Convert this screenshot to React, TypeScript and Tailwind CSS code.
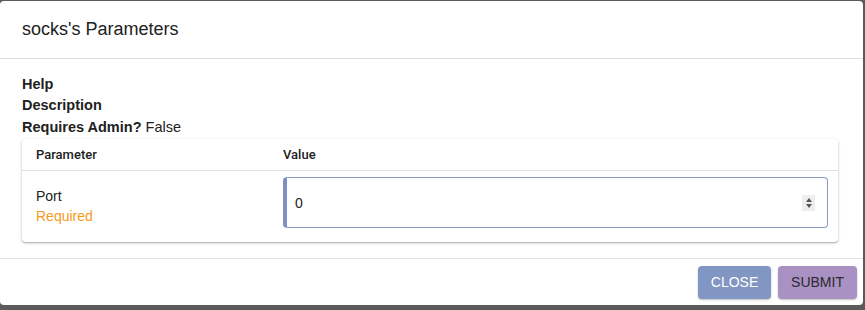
import React from "react";

export default function App() {
  return (
    <div className="w-[865px] h-[310px] bg-[#5b5b5b] overflow-hidden">
      <div className="mt-px w-[863px] h-[304px] bg-white rounded-[4px] flex flex-col font-['Liberation_Sans',Arial,sans-serif] text-[#212121]">
        <div className="h-[58px] px-[22px] flex items-center border-b border-[#dedede] text-[18px]">
          socks's Parameters
        </div>
        <div className="pl-[22px] pr-[25px] pt-[15px] pb-[16px] border-b border-[#e0e0e0]">
          <div className="text-[14.5px] leading-[21px] font-bold">Help</div>
          <div className="text-[14.5px] leading-[21px] font-bold">Description</div>
          <div className="text-[14.5px] leading-[22px]">
            <span className="font-bold">Requires Admin?</span> False
          </div>
          <div className="mt-[1px] rounded-[4px] shadow-[0_1px_3px_rgba(0,0,0,0.25),0_1px_1px_rgba(0,0,0,0.14)] text-[13px]">
            <div className="h-[32px] flex items-center border-b border-[#e0e0e0] font-medium font-['Roboto',sans-serif]">
              <div className="w-[261px] pl-[14px]">Parameter</div>
              <div>Value</div>
            </div>
            <div className="h-[71px] flex items-start">
              <div className="w-[261px] pl-[14px] pt-[15px] flex flex-col text-[14px]">
                <span className="leading-[20px]">Port</span>
                <span className="leading-[20px] text-[#f79a1b]">Required</span>
              </div>
              <div className="flex-1 pr-[10px] pt-[6px]">
                <div className="h-[51px] rounded-[4px] border border-[#8a9bc6] border-l-[4px] border-l-[#7d90c1] flex items-center pl-[8px] pr-[12px] text-[14px]">
                  <span className="flex-1 pt-px">0</span>
                  <div className="w-[13px] h-[16px] bg-[#eeeeee] flex flex-col items-center justify-center gap-[2px]">
                    <div className="w-0 h-0 border-l-[3px] border-r-[3px] border-b-[4px] border-l-transparent border-r-transparent border-b-[#555]" />
                    <div className="w-0 h-0 border-l-[3px] border-r-[3px] border-t-[4px] border-l-transparent border-r-transparent border-t-[#555]" />
                  </div>
                </div>
              </div>
            </div>
          </div>
        </div>
        <div className="flex-1 flex items-center justify-end gap-[7px] pr-[6px]">
          <button className="h-[33px] w-[73px] rounded-[4px] bg-[#8196c2] text-white text-[14px] shadow-[0_1px_2px_rgba(0,0,0,0.25)]">
            CLOSE
          </button>
          <button className="h-[33px] w-[79px] rounded-[4px] bg-[#a991c4] text-[#2a2a2a] text-[14px] shadow-[0_1px_2px_rgba(0,0,0,0.25)]">
            SUBMIT
          </button>
        </div>
      </div>
    </div>
  );
}
